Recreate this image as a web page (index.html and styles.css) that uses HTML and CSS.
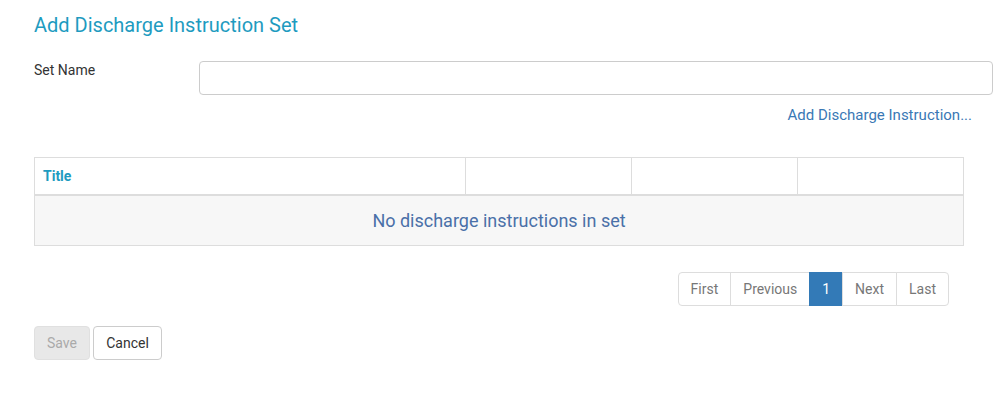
FILE: index.html
```html
<!DOCTYPE html>
<html>
<head>
<meta charset="utf-8">
<link rel="stylesheet" href="styles.css">
</head>
<body>
<div class="page">
  <h1 class="title">Add Discharge Instruction Set</h1>
  <div class="form-row">
    <label class="label">Set Name</label>
    <input class="input" type="text">
  </div>
  <div class="link-row"><a class="link" href="#">Add Discharge Instruction...</a></div>
  <table class="grid">
    <thead>
      <tr>
        <th class="c1">Title</th>
        <th class="c2"></th>
        <th class="c3"></th>
        <th class="c4"></th>
      </tr>
    </thead>
    <tbody>
      <tr><td class="empty" colspan="4">No discharge instructions in set</td></tr>
    </tbody>
  </table>
  <div class="pager-row">
    <ul class="pager">
      <li class="pg">First</li>
      <li class="pg">Previous</li>
      <li class="pg active">1</li>
      <li class="pg">Next</li>
      <li class="pg">Last</li>
    </ul>
  </div>
  <div class="actions">
    <button class="btn btn-save" disabled>Save</button>
    <button class="btn btn-cancel">Cancel</button>
  </div>
</div>
</body>
</html>
```
FILE: styles.css
```css
html, body { margin: 0; padding: 0; background: #fff; }
body { font-family: Roboto, "Liberation Sans", sans-serif; color: #333; font-size: 14px; }
.page { padding: 12px 11px 0 34px; }
.title { margin: 0; font-size: 20px; font-weight: 400; color: #1e9bc0; line-height: 26px; }
.form-row { display: flex; align-items: flex-start; margin-top: 23px; }
.label { width: 165px; font-size: 14px; line-height: 18px; padding-top: 0; color: #333; }
.input { flex: 1; height: 34px; box-sizing: border-box; border: 1px solid #ccc; border-radius: 4px; margin: 0; padding: 6px 12px; font: inherit; }
.link-row { text-align: right; padding-right: 21px; margin-top: 11px; line-height: 18px; }
.link { color: #3a78b5; text-decoration: none; font-size: 15px; }
.grid { width: 930px; border-collapse: collapse; margin-top: 33px; }
.grid th { height: 36px; border: 1px solid #ddd; border-bottom: 2px solid #ddd; text-align: left; padding: 0 8px; font-size: 14px; font-weight: 700; color: #1e9bc0; }
.grid .c1 { width: 414px; }
.grid .c2, .grid .c3 { width: 149px; }
.empty { height: 49px; background: #f7f7f7; border: 1px solid #ddd; text-align: center; font-size: 18px; color: #4a70a8; padding: 0; }
.pager-row { display: flex; justify-content: flex-end; width: 915px; margin-top: 26px; }
.pager { display: flex; list-style: none; margin: 0; padding: 0; }
.pg { height: 34px; box-sizing: border-box; border: 1px solid #ddd; margin-left: -1px; padding: 0 12px; line-height: 32px; font-size: 14px; color: #777; background: #fff; }
.pg:first-child { border-radius: 4px 0 0 4px; margin-left: 0; }
.pg:last-child { border-radius: 0 4px 4px 0; }
.pg.active { background: #337ab7; border-color: #337ab7; color: #fff; }
.actions { display: flex; gap: 3px; margin-top: 20px; }
.btn { height: 34px; box-sizing: border-box; border-radius: 4px; font: inherit; font-size: 14px; padding: 0 12px; }
.btn-save { background: #e8e8e8; border: 1px solid #e0e0e0; color: #aaa; width: 56px; }
.btn-cancel { background: #fff; border: 1px solid #ccc; color: #333; width: 69px; }
```
